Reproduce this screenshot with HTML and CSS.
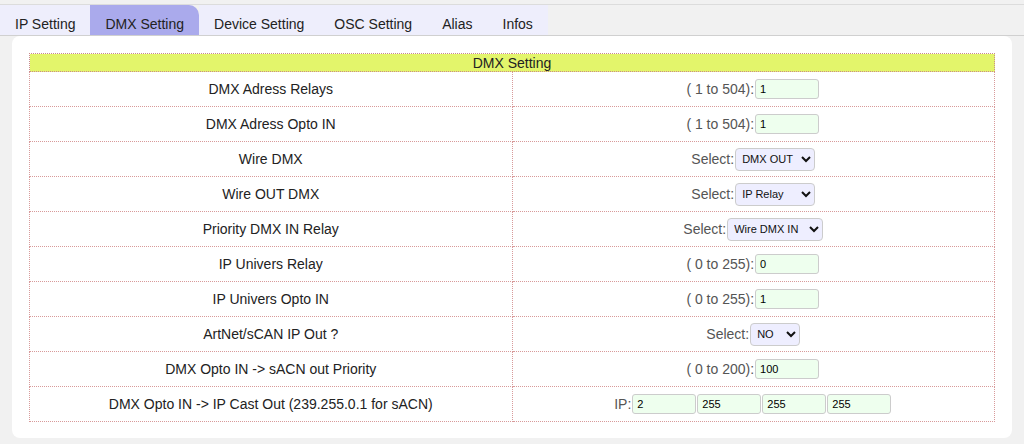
FILE: index.html
```html
<!DOCTYPE html>
<html lang="en">
<head>
  <meta charset="UTF-8">
  <meta name="viewport" content="width=device-width, initial-scale=1.0">
  <title>DMX Setting</title>
  <link rel="stylesheet" href="styles.css">
</head>
<body>
  <!-- onglets -->
  <div class="tabs">
    <div class="tab">IP Setting</div>
    <div class="tab active">DMX Setting</div>
    <div class="tab">Device Setting</div>
    <div class="tab">OSC Setting</div>
    <div class="tab">Alias</div>
    <div class="tab">Infos</div>
  </div>

  <div class="panel">
    <table class="setting">
      <tr>
        <th colspan="2">DMX Setting</th>
      </tr>
      <tr>
        <td>DMX Adress Relays</td>
        <td><span class="lbl">( 1 to 504):</span><input class="num" type="text" value="1"></td>
      </tr>
      <tr>
        <td>DMX Adress Opto IN</td>
        <td><span class="lbl">( 1 to 504):</span><input class="num" type="text" value="1"></td>
      </tr>
      <tr>
        <td>Wire DMX</td>
        <td><span class="lbl">Select:</span><select class="sel sel_dmx"><option>DMX OUT</option><option>DMX IN</option></select></td>
      </tr>
      <tr>
        <td>Wire OUT DMX</td>
        <td><span class="lbl">Select:</span><select class="sel sel_dmx"><option>IP Relay</option><option>Opto IN</option></select></td>
      </tr>
      <tr>
        <td>Priority DMX IN Relay</td>
        <td><span class="lbl">Select:</span><select class="sel sel_wire"><option>Wire DMX IN</option><option>IP DMX IN</option></select></td>
      </tr>
      <tr>
        <td>IP Univers Relay</td>
        <td><span class="lbl">( 0 to 255):</span><input class="num" type="text" value="0"></td>
      </tr>
      <tr>
        <td>IP Univers Opto IN</td>
        <td><span class="lbl">( 0 to 255):</span><input class="num" type="text" value="1"></td>
      </tr>
      <tr>
        <td>ArtNet/sCAN IP Out ?</td>
        <td><span class="lbl">Select:</span><select class="sel sel_no"><option>NO</option><option>YES</option></select></td>
      </tr>
      <tr>
        <td>DMX Opto IN -&gt; sACN out Priority</td>
        <td><span class="lbl">( 0 to 200):</span><input class="num" type="text" value="100"></td>
      </tr>
      <tr>
        <td>DMX Opto IN -&gt; IP Cast Out (239.255.0.1 for sACN)</td>
        <td><span class="lbl">IP:</span><input class="num" type="text" value="2"><input class="num" type="text" value="255"><input class="num" type="text" value="255"><input class="num" type="text" value="255"></td>
      </tr>
    </table>
  </div>
</body>
</html>
```

FILE: styles.css
```css
* {
  margin: 0;
  padding: 0;
  box-sizing: border-box;
}
body {
  background-color: #f1f1f1;
  font-family: "Liberation Sans", Arial, sans-serif;
  font-size: 14px;
  color: #222;
  padding-top: 4px;
}
.tabs {
  display: flex;
  height: 32px;
  border-top: 1px solid #dcdcdc;
  border-bottom: 1px solid #d0d0d0;
}
.tab {
  height: 30px;
  line-height: 26px;
  padding: 6px 15px 0;
  background-color: #eeeefc;
  color: #222;
  cursor: pointer;
}
.tab.active {
  background-color: #aaaaec;
  border-top-right-radius: 10px;
}
.panel {
  margin: 0 12px;
  height: 402px;
  padding: 17px 18px 0 17px;
  background-color: #fff;
  border-radius: 8px;
}
.setting {
  width: 966px;
  border-collapse: collapse;
  table-layout: fixed;
}
.setting th {
  height: 18px;
  font-weight: normal;
  font-size: 14px;
  line-height: 16px;
  background-color: #e3f56b;
  border: 1px dotted #c98b8b;
}
.setting td {
  width: 50%;
  height: 35px;
  text-align: center;
  border: 1px dotted #d89a9a;
  white-space: nowrap;
}
.lbl {
  color: #555;
  margin-right: 1px;
  vertical-align: middle;
}
.num {
  width: 64px;
  height: 20px;
  padding: 0 4px;
  margin-right: 1px;
  font-family: "Liberation Sans", Arial, sans-serif;
  font-size: 11px;
  color: #000;
  background-color: #eeffee;
  border: 1px solid #ccc;
  border-radius: 3px;
  vertical-align: middle;
}
.sel {
  height: 23px;
  padding: 0 2px;
  font-family: "Liberation Sans", Arial, sans-serif;
  font-size: 11px;
  color: #111;
  background-color: #eeeeff;
  border: 1px solid #ccc;
  border-radius: 4px;
  vertical-align: middle;
}
.sel_dmx {
  width: 80px;
}
.sel_wire {
  width: 96px;
}
.sel_no {
  width: 50px;
}
```
